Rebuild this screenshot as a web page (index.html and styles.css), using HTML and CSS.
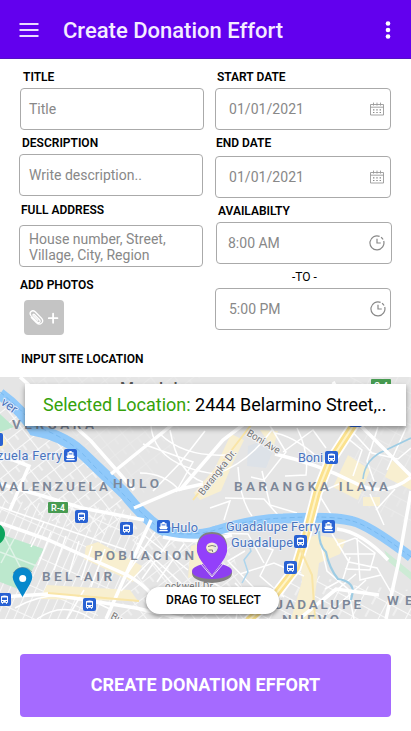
FILE: index.html
```html
<!DOCTYPE html>
<html lang="en">
<head>
<meta charset="utf-8">
<title>Create Donation Effort</title>
<link rel="stylesheet" href="styles.css">
</head>
<body>
<header class="bar">
  <svg class="menu" width="20" height="14" viewBox="0 0 20 14"><path d="M.5 1h19M.5 7h19M.5 13h19" stroke="#eadcff" stroke-width="2"/></svg>
  <h1>Create Donation Effort</h1>
  <svg class="more" width="6" height="18" viewBox="0 0 6 18" fill="#fff"><circle cx="3" cy="2.5" r="2.3"/><circle cx="3" cy="9" r="2.3"/><circle cx="3" cy="15.5" r="2.3"/></svg>
</header>
<main>
  <form class="form">
    <div class="col left">
      <div class="group title"><label>TITLE</label><div class="field">Title</div></div>
      <div class="group desc"><label>DESCRIPTION</label><div class="field">Write description..</div></div>
      <div class="group address"><label>FULL ADDRESS</label><div class="field">House number, Street,<br>Village, City, Region</div></div>
      <div class="group photos"><label>ADD PHOTOS</label>
        <div class="attach">
          <svg width="40" height="35" viewBox="0 0 40 35" fill="none" stroke="#fff" stroke-linecap="round"><path d="M7.3 17.5l5.2 5.3c3.8 3.3 8.2-.9 5-4.6l-6.3-6.4c-3-2.6-6.6.8-4.3 3.8l6.4 6.5c1.8 1.6 3.8-.2 2.4-2.1l-5.4-5.5c-.9-.8-1.9.1-1.1 1.2l4.6 4.7" stroke-width="1.3"/><path d="M24.8 18.2h8.6M29.1 13.6v9.2" stroke-width="1.8"/></svg>
        </div>
      </div>
    </div>
    <div class="col right">
      <div class="group start"><label>START DATE</label><div class="field">01/01/2021<svg class="icon" width="16" height="14"><use href="#calendar"/></svg></div></div>
      <div class="group end"><label>END DATE</label><div class="field">01/01/2021<svg class="icon" width="16" height="14"><use href="#calendar"/></svg></div></div>
      <div class="group avail"><label>AVAILABILTY</label><div class="field">8:00 AM<svg class="icon" width="16" height="16"><use href="#clock"/></svg></div></div>
      <div class="group until"><span class="to">-TO -</span><div class="field">5:00 PM<svg class="icon" width="16" height="16"><use href="#clock"/></svg></div></div>
    </div>
  </form>
  <h2>INPUT SITE LOCATION</h2>
  <section class="map">
    <svg class="tiles" width="411" height="242" viewBox="0 377 411 242">
      <defs>
        <symbol id="calendar" viewBox="0 0 16 14"><path d="M1.5 2.5h13v10.5h-13zM1.5 5.2h13M4.5.6v3M8 .6v3M11.5.6v3" fill="none" stroke="#999" stroke-width=".9"/><path d="M4 7.8h8.5M4 10.5h8.5" stroke="#888" stroke-width="1.2" stroke-dasharray="1.4 1.9"/></symbol>
        <symbol id="clock" viewBox="0 0 16 16"><path d="M10.6 1.4A7 7 0 1 0 14.7 6M8 3.8V8h3.8" fill="none" stroke="#888" stroke-width="1.2"/><path d="M12 2.3a7 7 0 0 1 2.1 2.2" fill="none" stroke="#888" stroke-width="1.1"/></symbol>
        <g id="bus"><rect width="13" height="13" rx="2" fill="#2962d3"/><path d="M3 3.2q3.5-1.4 7 0v6.6H9v1H8v-1H5v1H4v-1H3z" fill="#fff"/><path d="M4 4.4h5v2.5H4zM4 8.1h1.2v.8H4zM7.8 8.1H9v.8H7.8z" fill="#2962d3"/></g>
        <g id="ferry"><rect width="13" height="13" rx="2" fill="#2962d3"/><path d="M5.3 2h2.4v1.3h1.8v3.2l1.3.5-1 2.3H3.2L2.2 7l1.3-.5V3.3h1.8zM2.3 10h8.4v1.2H2.3z" fill="#fff"/><path d="M4.6 4.4h3.8v1H4.6z" fill="#2962d3"/></g>
        <pattern id="blocksA" width="19" height="13" patternUnits="userSpaceOnUse" patternTransform="rotate(-38)"><path d="M0 .5h19M.5 0v13M10 0v7" stroke="#fafafa" stroke-width="1.2"/></pattern>
        <pattern id="blocksB" width="8" height="29" patternUnits="userSpaceOnUse" patternTransform="rotate(24)"><path d="M.5 0v29M0 .5h8" stroke="#f8f8f8" stroke-width="1.1"/></pattern>
        <pattern id="blocksC" width="24" height="14" patternUnits="userSpaceOnUse" patternTransform="rotate(28)"><path d="M0 .5h24M.5 0v14M12 0v9" stroke="#f9f9f9" stroke-width="1.1"/></pattern>
      </defs>
      <rect y="377" width="411" height="242" fill="#e5e5e5"/>
      <path d="M0 405L80 452L132 505L100 540L0 500z" fill="url(#blocksA)"/>
      <path d="M0 500L130 510L145 560L95 619H0z" fill="url(#blocksB)"/>
      <path d="M20 377H200L180 430L140 500L70 430z" fill="url(#blocksA)" opacity=".2"/>
      <path d="M135 525L230 540L250 619H120z" fill="url(#blocksA)" opacity=".8"/>
      <path d="M300 570L350 585L411 590V619H255z" fill="url(#blocksC)"/>
      <path d="M350 377H411V525L350 500z" fill="url(#blocksC)" opacity=".3"/>
      <!-- commercial areas -->
      <g fill="#f8efd0">
        <path d="M231 434L244 440L232 465L221 491L200 500L194 493L215 468z"/><path d="M348 455L370 470L358 500L333 487z"/><path d="M86 546L98 542L142 566L133 582L84 559z"/><path d="M47 585L130 590L138 601L40 599z"/><path d="M191 546L214 540L212 570L188 578z"/><path d="M299 541L316 535L346 540L340 554L319 563L312 619H291L302 581z"/><path d="M363 497h17v9h-17zM392 460L411 477V490L385 477zM260 430L278 431L273 449z"/><path d="M0 428L7 444L0 450zM100 404L150 386H205V397L150 410z"/>
      </g>
      <g fill="#cdebd5"><path d="M384 550L411 572V580L389 562z"/></g>
      <path d="M0 534L44 549L21 590L0 582z" fill="#bce8cd"/><path d="M0 414L14 427L0 432z" fill="#bce8cd"/><path d="M248 446L262 441L272 453L266 468L247 466z" fill="#dde2e8"/>
      <g fill="none" stroke="#dff3e7" stroke-width="1.5"><path d="M4 536L27 580M14 539L1 563M0 552L37 566"/></g>
      <!-- local roads -->
      <g fill="none" stroke="#fff" stroke-width="1.5">
        <path d="M151 426Q155 466 216 474Q248 463 272 430M160 434Q184 457 226 455M170 430Q178 474 203 482M143 444L193 462L176 492M140 473Q165 473 180 491M153 491L180 463L205 431M238 467Q240 500 252 516M262 471L270 505L297 513M269 424L286 452L264 480L251 477M275 433Q300 438 326 466M283 452L313 430L326 448M297 428Q309 452 306 475L285 476M225 498L264 499L285 523M210 508L230 501L224 520"/>
        <path d="M349 428L372 453L398 459L411 448M346 437L362 450L353 476M378 427L367 461L374 481M406 428L387 470M370 494L384 525M395 489L376 510M339 484L318 493L332 516M248 541L273 550L260 576L284 597M245 551L228 561L256 590M240 574L274 563L304 576M235 583L258 606L274 590M318 532L327 571L348 589L354 619M332 534L349 562L377 568L392 594M337 545L355 538L375 553L370 570L345 569M345 554H374M357 538L360 580L381 575M320 604L356 574M328 614L366 580M350 557L343 579L325 589"/>
        <path d="M0 507L44 522L31 547M44 522L126 550M51 532L38 565M66 536L54 570M79 541L69 574M92 546L81 580M105 549L91 587M15 608Q60 582 112 610M37 619Q64 600 92 619M67 619L84 590M137 543L181 583M145 536L188 570M155 532L125 577M170 540L142 579M184 544L157 582M121 591L151 560L183 596M211 582L240 597L236 619M218 533L248 534L264 563"/>
      </g>
      <!-- waterways -->
      <path d="M0 394Q22 410 34 430Q62 435 80 451L124 493Q143 517 161 529Q184 541 218 531" fill="none" stroke="#90c9fa" stroke-width="11.5"/>
      <path d="M212 532Q252 519 283 518.500Q333 516 352 521Q369 525 411 557" fill="none" stroke="#90c9fa" stroke-width="10"/>
      <path d="M0 392Q24 411 34 426Q71 438 91 463L130 501Q147 519 160 529Q185 539 219 529Q252 519 284 518Q333 515 352 521Q369 525 411 557" fill="none" stroke="#6fb2e9" stroke-width=".7" stroke-dasharray="5 3"/>
      <path d="M319 531Q319 546 326 552Q329 568 338 579Q352 581 353 591L351 600" fill="none" stroke="#9dcce4" stroke-width="2.2"/><path d="M247 540L251 551L244 560L248 572L242 583" fill="none" stroke="#add5ed" stroke-width="1.5"/><path d="M363 479Q365 458 386 450L411 438" fill="none" stroke="#9dcce4" stroke-width="1.6"/>
      <!-- arterial roads -->
      <g fill="none" stroke="#fff" stroke-width="3.500">
        <path d="M0 484L43 496L82 508L144 520M0 523L46 539L127 575Q151 588 161 609M0 597L48 594L136 608L183 619M0 455L29 466L10 510M111 474L173 424M134 508L176 490L203 484M20 377L91 441L134 490M106 619L132 561L151 520M275 454Q318 464 353 482Q384 499 411 477M333 382L360 425L411 476M180 490L223 440L268 406"/>
        <path d="M411 491L398 565L386 619M163 537Q200 545 232 535M299 619L336 589L379 595M337 529Q362 532 388 560"/>
      </g>
      <g fill="none"><path d="M364 409L329 463L317 493L306 535L296 568L272 599L248 621" stroke="#fff" stroke-width="11"/><path d="M364 409L329 463L317 493L306 535L296 568L272 599L248 621" stroke="#fbe28f" stroke-width="7.500"/><path d="M364 409L329 463L317 493L306 535L296 568L272 599L248 621" stroke="#fff4c7" stroke-width="2"/><path d="M193 500L241 438L261 412M296 540L312 575L315 619M48 593L139 601" stroke="#f9e5a7" stroke-width="2"/></g>
      <!-- place names -->
      <g class="area">
        <text x="12" y="429" textLength="82">VERGARA</text><text x="-2" y="491" textLength="110">VALENZUELA</text><text x="113" y="488" textLength="46">HULO</text><text x="234" y="491" textLength="154">BARANGKA ILAYA</text><text x="94" y="560" textLength="100">POBLACION</text><text x="42" y="581" textLength="70">BEL-AIR</text><text x="274" y="609" textLength="87">UADALUPE</text><text x="282" y="623.5" textLength="57">NUEVO</text><text x="387" y="605" textLength="40">WES</text>
      </g>
      <text x="120" y="393.5" class="city" textLength="76">Mandaluy</text>
      <g class="transit">
        <text x="-3" y="460" textLength="65">zuela Ferry</text><text x="298" y="462" textLength="25">Boni</text><text x="171" y="532" textLength="27">Hulo</text><text x="226" y="531" textLength="94">Guadalupe Ferry</text><text x="231" y="547" textLength="62">Guadalupe</text><text x="0" y="404" transform="rotate(36 0 404)">ver</text>
      </g>
      <g class="road"><text x="0" y="0" transform="translate(203 496) rotate(-52)" textLength="55">Barangka Dr.</text><text x="0" y="0" transform="translate(246 435) rotate(31)" textLength="37">Boni Ave</text><text x="165" y="590" textLength="48">ockwell Dr</text><text x="0" y="0" transform="translate(110 618) rotate(28)">Buendia</text></g>
      <use href="#ferry" x="64" y="449"/><use href="#bus" x="325" y="451"/><use href="#bus" x="349" y="414"/><use href="#bus" x="75" y="510"/><use href="#bus" x="120" y="522"/><use href="#ferry" x="157" y="520"/><use href="#ferry" x="322" y="520"/><use href="#bus" x="294" y="535"/><use href="#bus" x="284" y="561"/><use href="#bus" x="83" y="598"/><use href="#bus" x="-2" y="593"/><use href="#bus" x="-10" y="433"/>
      <rect x="48" y="502" width="20" height="11" rx="1" fill="#479b51"/><text class="route" x="51" y="511" textLength="14">R-4</text>
      <rect x="371" y="379" width="20" height="11" rx="1" fill="#479b51"/><text class="route" x="374" y="388.5" textLength="14">C-4</text>
      <circle cx="-6" cy="534" r="11" fill="#0ba45c"/>
      <path d="M22.5 597L15 584Q12.7 580 12.7 577A9.8 9.8 0 0 1 32.3 577Q32.3 580 30 584z" fill="#0788cc"/><circle cx="22.7" cy="578.5" r="3.5" fill="#fff"/><path d="M13 573Q18 567 23 567.5Q28 567 32 572" fill="none" stroke="#667f8c" stroke-width=".6"/>
    </svg>
    <div class="selected"><span>Selected Location:</span> 2444 Belarmino Street,..</div>
    <svg class="pin" width="44" height="52" viewBox="0 0 44 52">
      <path d="M2 42Q2 37 13 34L22 46L31 34Q42 37 42 42Q42 50 22 52Q2 50 2 42z" fill="#828080"/>
      <path d="M2 40Q2 36 13 33L22 45L31 33Q42 36 42 40Q41 47 22 48Q2 47 2 40z" fill="#8d3ff0"/>
      <path fill-rule="evenodd" d="M22 44L12 30Q6 21 7 14Q9 1 22 1T37 14Q38 21 32 30zM16 16a6 6 0 1 0 12 0a6 6 0 1 0-12 0" fill="#828080"/>
      <path fill-rule="evenodd" d="M22 44L12 31Q6 23 7 16Q9 3 22 3T37 16Q38 23 32 31zM16 17a6 5.5 0 1 0 12 0a6 5.5 0 1 0-12 0" fill="#9340fb"/>
      <path d="M18 15.500q4-2 8 0M18.500 19h4v2" fill="none" stroke="#828080" stroke-width="1"/>
      <path d="M11 33L22 46L33 33" fill="none" stroke="#eadcf5" stroke-width="1"/>
    </svg>
    <div class="drag">DRAG TO SELECT</div>
  </section>
  <button class="submit">CREATE DONATION EFFORT</button>
</main>
</body>
</html>
```
FILE: styles.css
```css
* { box-sizing: border-box; }
body { margin: 0; width: 411px; height: 731px; overflow: hidden; background: #fff; color: #000; font-family: Roboto, "Liberation Sans", sans-serif; }
.bar { height: 59px; padding: 2px 20px 0 19px; display: flex; align-items: center; background: #6200ee; border-bottom: 1px solid #5410c4; }
.bar h1 { margin: 1px 0 0 24px; flex: 1; color: #f4ecff; font-size: 22px; font-weight: 500; line-height: 28px; white-space: nowrap; }
.form { display: grid; grid-template-columns: 185px 177px; column-gap: 11px; padding: 11px 19px 0; height: 293px; }
.col { display: flex; flex-direction: column; }
.group label, .to, h2 { display: block; font-size: 12px; line-height: 14px; font-weight: 600; white-space: nowrap; }
.field { height: 42px; width: 184px; border: 1px solid #aaa; border-radius: 4px; display: flex; align-items: center; padding: 0 0 0 9px; color: #888; font-size: 14px; line-height: 16px; background: #fff; margin-top: 4px; }
.right .field { width: 176px; justify-content: space-between; padding: 0 5px 0 13px; letter-spacing: .05px; }
.group + .group { margin-top: 6px; }
.title label { padding-left: 4px; }
.title .field { margin-left: 1px; padding-left: 8px; }
.desc label { padding-left: 3px; }
.address label { padding-left: 2px; }
.group.address { margin-top: 7px; }
.address .field { margin-top: 8px; padding-top: 2px; }
.group.photos { margin-top: 11px; }
.photos label { padding-left: 1px; }
.attach { width: 40px; height: 35px; margin: 8px 0 0 5px; border-radius: 4px; background: #c4c4c4; }
.attach svg { display: block; }
.right label { padding-left: 2px; }
.end .field { margin-top: 6px; }
.right .end label { padding-left: 1px; }
.right .avail label { padding-left: 3px; }
.avail .field { margin-left: 1px; }
.right .avail .field { padding-left: 11px; padding-right: 6px; letter-spacing: 0; }
.right .until .field { padding-right: 4px; letter-spacing: 0; }
.icon { margin-top: -1px; }
.to { font-weight: 400; padding-left: 77px; }
h2 { margin: 0 0 11px 21px; }
.map { position: relative; height: 242px; overflow: hidden; }
.tiles { display: block; }
.area { fill: #7c8798; font-size: 13.5px; font-weight: 600; }
.city { fill: #555; font-size: 16px; font-weight: 500; }
.transit { fill: #4a73bc; font-size: 12.7px; font-weight: 400; stroke: #eef3fb; stroke-width: 1.5px; paint-order: stroke; }
.road { fill: #777; font-size: 10px; stroke: #f4f4f4; stroke-width: 2px; paint-order: stroke; }
.route { fill: #fff; font-size: 9px; font-weight: 600; }
.selected { position: absolute; left: 25px; top: 7px; width: 381px; height: 42px; padding-left: 18px; background: #fff; box-shadow: 0 3px 5px rgba(0,0,0,.38); font-size: 18px; line-height: 42px; white-space: nowrap; }
.selected span { color: #35a20a; }
.pin { position: absolute; left: 190px; top: 154px; }
.drag { position: absolute; left: 146px; top: 210px; width: 133px; height: 27px; padding-left: 2px; border-radius: 14px; background: #fff; box-shadow: 0 2px 4px rgba(0,0,0,.45); font-size: 12px; line-height: 27px; font-weight: 500; text-align: center; }
.submit { display: block; margin: 35px 20px 0; width: 371px; height: 63px; padding: 0 0 2px; border: 0; border-radius: 4px; background: #a56aff; color: #fff; font: 700 18px/61px Roboto, sans-serif; letter-spacing: .04px; text-align: center; white-space: nowrap; }
```
